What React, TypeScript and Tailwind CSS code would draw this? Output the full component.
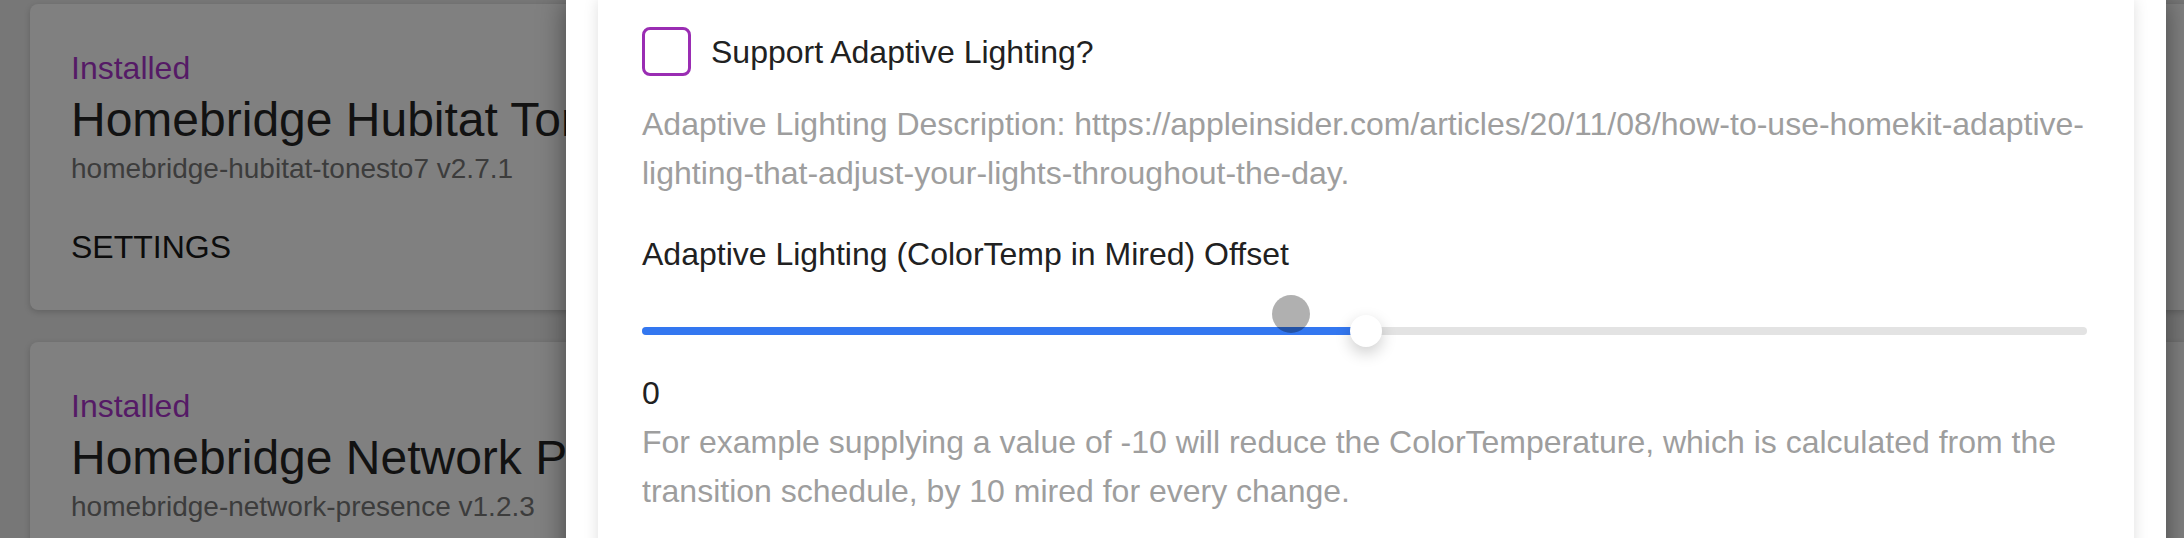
import React from 'react';

const font = { fontFamily: "'Liberation Sans', Arial, sans-serif" };

interface PluginCardProps {
  title: string;
  pkg: string;
  showSettings?: boolean;
}

function PluginCard({ title, pkg, showSettings }: PluginCardProps) {
  return (
    <div className="w-[2400px] shrink-0 rounded-lg bg-[#808080] pl-[41px] pt-[44px] pb-[43px] shadow-[0_2px_6px_rgba(0,0,0,0.18)]">
      <div className="text-[32px] leading-[40px] text-[#551a66]">Installed</div>
      <div className="mt-1 whitespace-nowrap text-[48px] leading-[56px] text-[#121212]">{title}</div>
      <div className="mt-[3px] whitespace-nowrap text-[28px] leading-[36px] text-[#3c3c3c]">{pkg}</div>
      {showSettings && (
        <div className="mt-10 text-[32px] leading-[40px] text-[#0c0c0c]">SETTINGS</div>
      )}
    </div>
  );
}

function OffsetSlider({ percent }: { percent: number }) {
  return (
    <div className="relative h-[91px]">
      <div className="absolute left-0 right-0 top-[49px] h-2 rounded-full bg-[#e3e3e3]">
        <div className="h-2 rounded-full bg-[#3377f0]" style={{ width: `${percent}%` }} />
      </div>
      {/* value bubble ghost */}
      <div className="absolute left-[630px] top-[17px] h-[38px] w-[38px] rounded-full bg-[rgba(0,0,0,0.31)]" />
      <div
        className="absolute top-[37px] h-8 w-8 -translate-x-1/2 rounded-full bg-white shadow-[0_6px_16px_rgba(0,0,0,0.2)]"
        style={{ left: `${percent}%` }}
      />
    </div>
  );
}

export default function App() {
  return (
    <div className="relative h-[538px] w-[2184px] overflow-hidden bg-[#777777]" style={font}>
      {/* dimmed plugin list behind the dialog */}
      <div className="flex flex-col gap-8 pl-[30px] pt-1">
        <PluginCard
          title="Homebridge Hubitat Tonesto7"
          pkg="homebridge-hubitat-tonesto7 v2.7.1"
          showSettings
        />
        <PluginCard
          title="Homebridge Network Presence"
          pkg="homebridge-network-presence v1.2.3"
        />
      </div>

      {/* settings dialog */}
      <div className="absolute left-[566px] top-0 h-[600px] w-[1600px] bg-white px-8 shadow-[0_0_26px_rgba(0,0,0,0.45)]">
        <div className="h-full bg-white pl-[44px] pr-[47px] pt-[27px] shadow-[0_0_14px_rgba(0,0,0,0.13)]">
          <div className="flex h-[49px] items-center gap-5">
            <div className="h-[49px] w-[49px] shrink-0 rounded-lg border-[3px] border-[#9a2db3]" />
            <span className="text-[32px] leading-[48px] text-[#212121]">Support Adaptive Lighting?</span>
          </div>

          <p className="mt-6 text-[32px] leading-[49px] text-[#9e9e9e]">
            Adaptive Lighting Description: https://appleinsider.com/articles/20/11/08/how-to-use-homekit-adaptive-
            <br />
            lighting-that-adjust-your-lights-throughout-the-day.
          </p>

          <div className="mt-8 text-[32px] leading-[48px] text-[#212121]">
            Adaptive Lighting (ColorTemp in Mired) Offset
          </div>

          <OffsetSlider percent={50.1} />

          <div className="text-[32px] leading-[48px] text-[#212121]">0</div>
          <p className="mt-px text-[32px] leading-[49px] text-[#9e9e9e]">
            For example supplying a value of -10 will reduce the ColorTemperature, which is calculated from the
            <br />
            transition schedule, by 10 mired for every change.
          </p>
        </div>
      </div>
    </div>
  );
}
